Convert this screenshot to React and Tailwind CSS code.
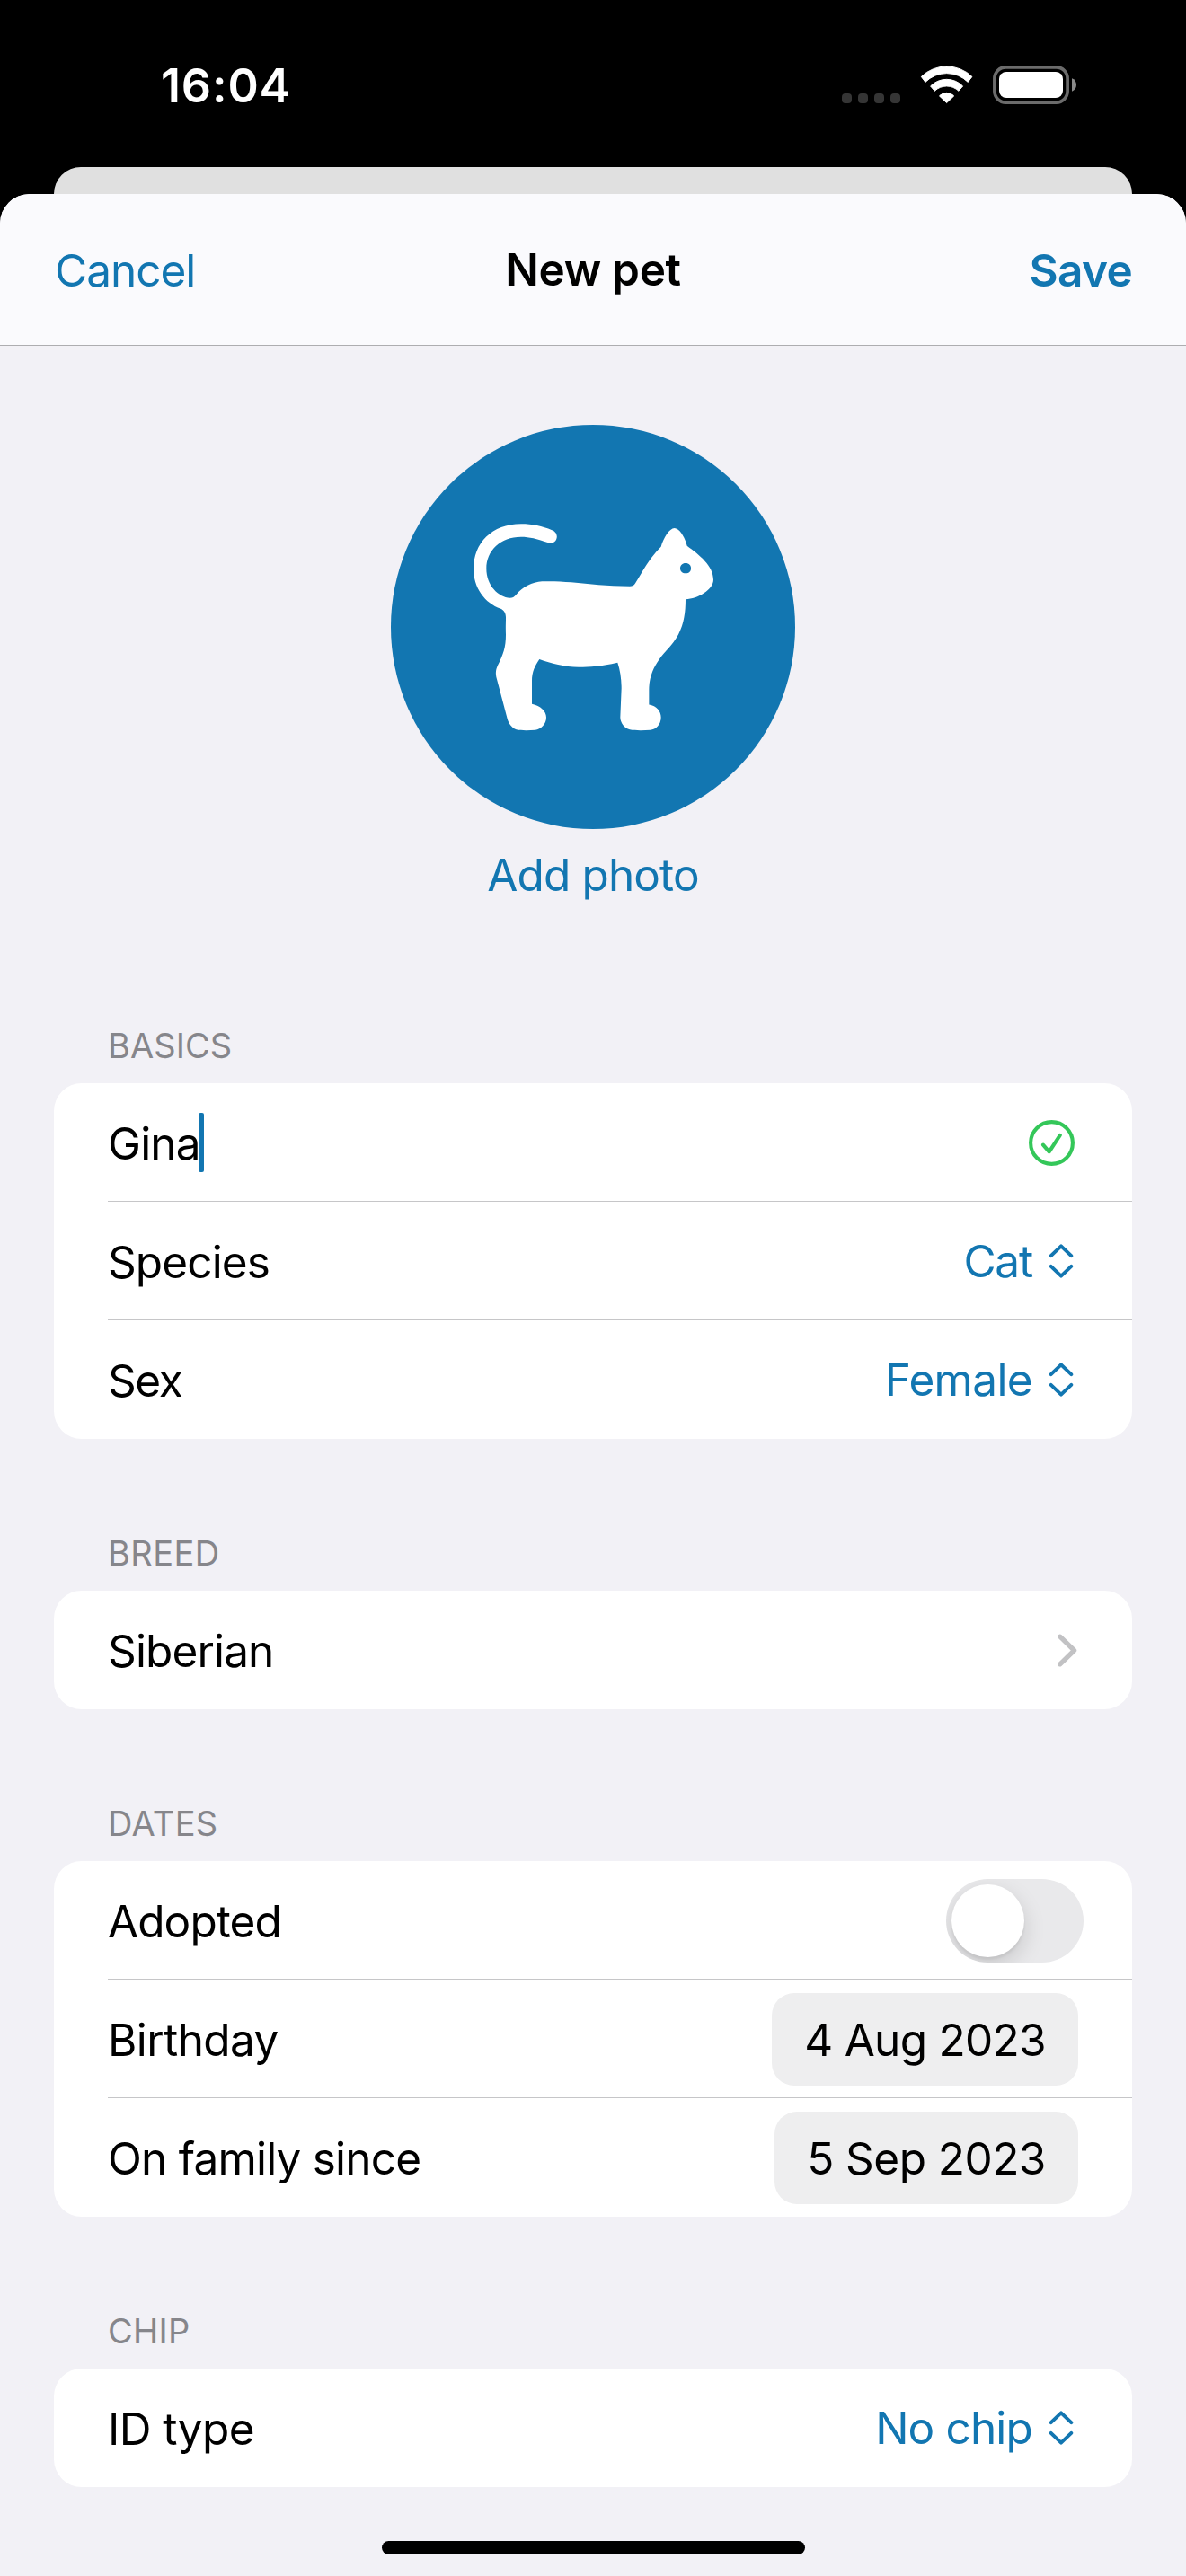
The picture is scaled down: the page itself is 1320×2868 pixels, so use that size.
function WifiIcon() {
  return (
    <svg width="59" height="43" viewBox="0 0 59 43" fill="#fff" stroke="#fff" strokeWidth="1" strokeLinejoin="round">
      <path d="M1.3 12.4A40.6 40.6 0 0 1 57.9 12.4L53.3 18.4A33.6 33.6 0 0 0 5.9 18.4Z" />
      <path d="M11.6 22.9A25.2 25.2 0 0 1 47.6 22.9L43 28.3A19.5 19.5 0 0 0 16.2 28.3Z" />
      <path d="M21.5 33.9A11 11 0 0 1 37.7 33.9L29.6 41.6Z" />
    </svg>
  );
}

function BatteryIcon() {
  return (
    <svg width="94" height="43" viewBox="0 0 94 43">
      <rect x="1.9" y="1.9" width="81.2" height="39.2" rx="12.5" fill="none" stroke="#6b6b6b" strokeWidth="3.7" />
      <rect x="7" y="7" width="71" height="29" rx="8" fill="#fff" />
      <path d="M88 14.3C91 15.3 93 18.2 93 21.5C93 24.8 91 27.7 88 28.7Z" fill="#8a8a8a" />
    </svg>
  );
}

function CatAvatar() {
  return (
    <svg className="size-[450px]" viewBox="45 36 1350 1260" preserveAspectRatio="none">
      <ellipse cx="720" cy="666" rx="675" ry="630" fill="#1276b1" />
      <path
        fill="#fff"
        d="M583 364C603 371 603 391 592 400C584 406 575 405 566 402C534 391 507 385 480 385C410 385 364 428 364 484C364 537 404 573 443 576C451 576 457 573 463 566C485 541 516 526 550 524C580 523 615 524 647 527C710 533 765 539 843 539C851 539 857 536 861 530C885 497 898 463 947 416C955 389 975 358 992 358C1008 358 1027 386 1034 413C1074 441 1122 474 1122 519C1122 550 1070 578 1029 580C1029 620 1024 655 1005 690C985 724 960 742 942 766C920 794 907 826 907 862L907 908C932 912 947 928 947 948C947 970 930 986 911 987C888 989 860 989 843 986C825 982 811 964 811 948L815 858C815 830 811 802 802 777C747 789 710 791 672 791C625 791 580 780 541 767C526 788 516 806 516 836L516 906C545 911 564 929 564 948C564 969 546 985 527 987C505 989 480 989 464 986C450 981 437 965 434 952L397 822C394 808 396 798 402 786C420 752 429 730 429 690C428 670 429 655 429 636C429 625 424 614 412 609C358 592 321 543 321 486C321 405 382 345 480 345C518 345 550 352 583 364Z"
      />
      <path d="M1029 467C1041 467 1047 474 1047 483C1047 492 1041 499 1029 499C1018 499 1011 492 1011 483C1011 474 1018 467 1029 467Z" fill="#1276b1" />
    </svg>
  );
}

function CheckIcon() {
  return (
    <svg width="51" height="51" viewBox="0 0 51 51" fill="none" stroke="#34c759" strokeWidth="4.1" strokeLinecap="round" strokeLinejoin="round" className="mt-px">
      <circle cx="25.5" cy="25.5" r="23.4" />
      <path d="M16 27.6L22.7 35.3L34.8 16.9" />
    </svg>
  );
}

function UpDownIcon() {
  return (
    <svg width="28" height="40" viewBox="0 0 28 40" fill="none" stroke="#1276b1" strokeWidth="3.9" strokeLinecap="round" strokeLinejoin="round" className="mr-[5px]">
      <path d="M2.7 14.2L14 3.3L25.3 14.2" />
      <path d="M2.7 25.8L14 36.7L25.3 25.8" />
    </svg>
  );
}

function ChevronIcon() {
  return (
    <svg width="23" height="37" viewBox="0 0 23 37" fill="none" stroke="#c2c2c4" strokeWidth="5.3" strokeLinecap="round" strokeLinejoin="round">
      <path d="M2.8 3.2L18.6 18.5L2.8 33.8" />
    </svg>
  );
}

function StatusBar() {
  return (
    <div className="flex h-[186px] items-center justify-between pt-[3px] pr-[121px] pl-[179px]">
      <span className="pt-[3px] text-[52px] leading-[60px] font-semibold tracking-[0.87px] text-white">16:04</span>
      <div className="flex items-center">
        <div className="mt-[30px] mr-[22px] flex gap-[7px]">
          {[0, 1, 2, 3].map((i) => (
            <span key={i} className="size-[11px] rounded-[4px] bg-[#353535]" />
          ))}
        </div>
        <div className="mr-[22px] -mt-px">
          <WifiIcon />
        </div>
        <BatteryIcon />
      </div>
    </div>
  );
}

function Section({ title, tracking, children }) {
  return (
    <section className="mx-[60px]">
      <h2 className={`mb-[19px] h-[46px] pl-[60px] text-[38px] leading-[46px] text-[#86868b] ${tracking}`}>{title}</h2>
      <div className="rounded-[31px] bg-white pl-[60px]">{children}</div>
    </section>
  );
}

function Row({ label, tracking, last, end = "pr-[60px]", children }) {
  return (
    <div className={`flex h-[132px] items-center justify-between ${end} ${last ? "" : "shadow-[inset_0_-1px_0_#c6c6c8]"}`}>
      <span className={`relative pt-[2px] text-[49.5px] leading-[60px] text-black ${tracking}`}>{label}</span>
      {children}
    </div>
  );
}

function Picker({ value, tracking }) {
  return (
    <div className="flex items-center gap-[18px]">
      <span className={`text-[49.5px] leading-[60px] text-[#1276b1] ${tracking}`}>{value}</span>
      <UpDownIcon />
    </div>
  );
}

function DatePill({ value, tracking, width }) {
  return (
    <div className={`mt-px flex h-[103px] items-center justify-center rounded-[25px] bg-[#eeeeef] ${width}`}>
      <span className={`pt-px text-[49.5px] leading-[60px] text-black ${tracking}`}>{value}</span>
    </div>
  );
}

export default function App() {
  return (
    <div className="flex h-[2868px] w-[1320px] flex-col overflow-hidden bg-black font-['Inter',sans-serif]">
      <StatusBar />
      <div className="mx-[60px] h-[30px] shrink-0 rounded-t-[30px] bg-[#e0e0e0]" />
      <div className="flex flex-1 flex-col overflow-hidden rounded-t-[33px] bg-[#f2f1f6]">
        <header className="grid h-[169px] shrink-0 grid-cols-3 items-center border-b border-[#adadb0] bg-[#fafafd] px-[60px] text-[49.5px] leading-[60px]">
          <span className="pt-[2px] pl-px tracking-[-1.01px] text-[#1276b1]">Cancel</span>
          <span className="text-center font-semibold tracking-[-0.33px] text-black">New pet</span>
          <span className="pt-[2px] text-right font-semibold tracking-[-0.68px] text-[#1276b1]">Save</span>
        </header>

        <div className="flex flex-col items-center pt-[88px] pb-[137px]">
          <CatAvatar />
          <span className="mt-[21px] text-[49.5px] leading-[60px] tracking-[-0.87px] text-[#1276b1]">Add photo</span>
        </div>

        <div className="flex flex-col gap-[104px]">
          <Section title="BASICS" tracking="tracking-[0.08px]">
            <Row
              label={
                <>
                  Gina
                  <span className="absolute -top-[2px] left-[100.5px] h-[66px] w-[6px] rounded-[2px] bg-[#1276b1]" />
                </>
              }
              tracking="tracking-[-0.8px]"
              end="pr-[64px]"
            >
              <CheckIcon />
            </Row>
            <Row label="Species" tracking="tracking-[-0.89px]">
              <Picker value="Cat" tracking="tracking-[-1.18px]" />
            </Row>
            <Row label="Sex" tracking="tracking-[-1.4px]" last>
              <Picker value="Female" tracking="tracking-[-0.65px]" />
            </Row>
          </Section>

          <Section title="BREED" tracking="tracking-[0.45px]">
            <Row label="Siberian" tracking="tracking-[-0.86px]" last>
              <ChevronIcon />
            </Row>
          </Section>

          <Section title="DATES" tracking="tracking-[0.33px]">
            <Row label="Adopted" tracking="tracking-[-0.92px]" end="pr-[54px]">
              <div className="mt-px h-[93px] w-[153px] overflow-hidden rounded-full bg-[#e9e9eb] p-[6px]">
                <div className="size-[81px] rounded-full bg-white shadow-[0_9px_24px_rgba(0,0,0,0.15),0_3px_3px_rgba(0,0,0,0.06)]" />
              </div>
            </Row>
            <Row label="Birthday" tracking="tracking-[-0.58px]">
              <DatePill value="4 Aug 2023" tracking="tracking-[-0.73px]" width="w-[341px]" />
            </Row>
            <Row label="On family since" tracking="tracking-[-0.79px]" last>
              <DatePill value="5 Sep 2023" tracking="tracking-[-0.54px]" width="w-[338px]" />
            </Row>
          </Section>

          <Section title="CHIP" tracking="tracking-[0.27px]">
            <Row label="ID type" tracking="tracking-[-0.57px]" last>
              <Picker value="No chip" tracking="tracking-[-0.84px]" />
            </Row>
          </Section>
        </div>

        <div className="mx-auto mt-[60px] h-[15px] w-[471px] shrink-0 rounded-full bg-black" />
      </div>
    </div>
  );
}
